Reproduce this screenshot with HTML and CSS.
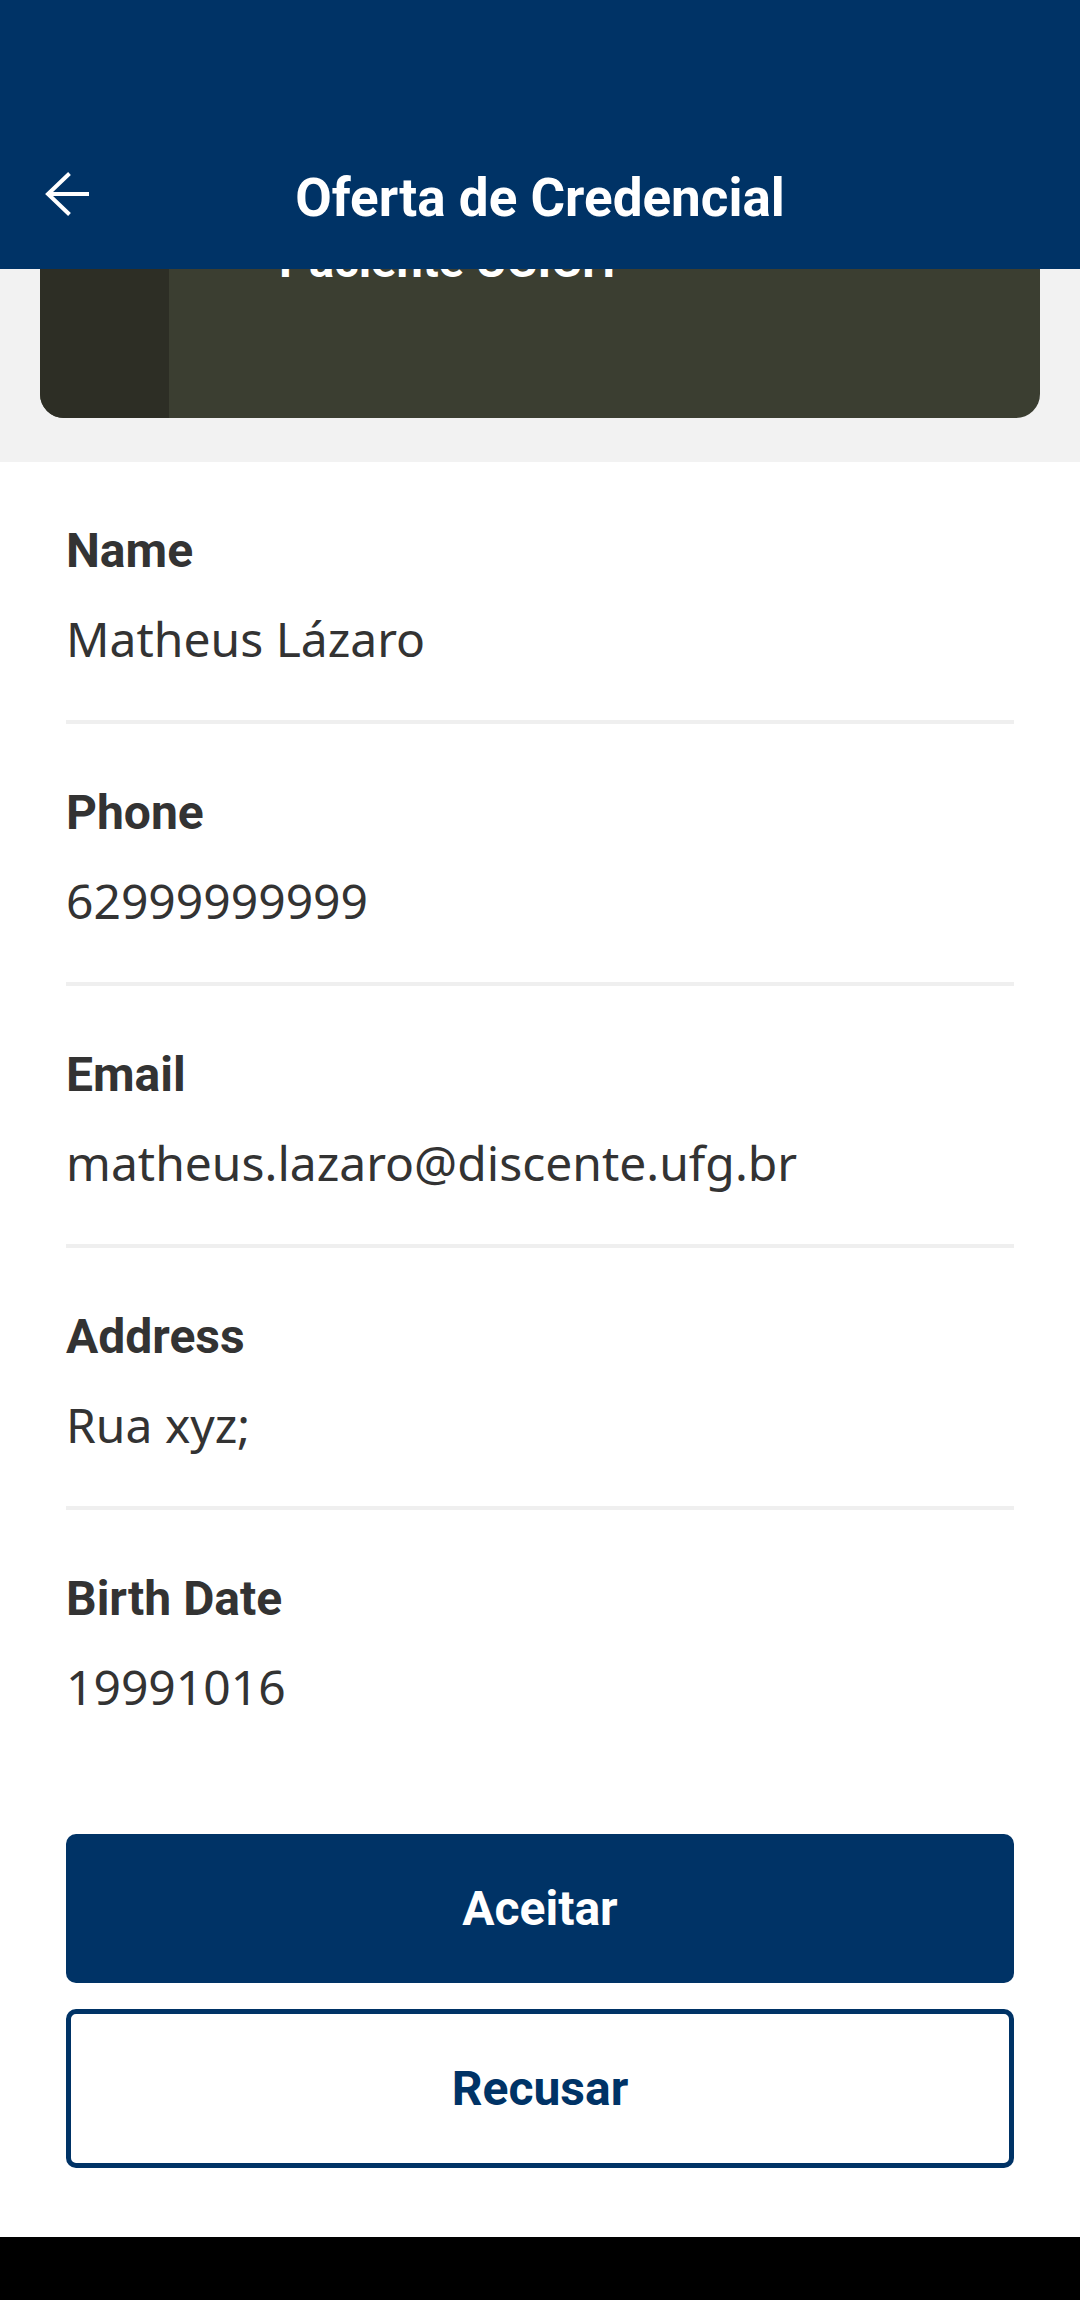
FILE: index.html
```html
<!DOCTYPE html>
<html lang="pt-BR">
<head>
<meta charset="utf-8">
<title>Oferta de Credencial</title>
<link rel="stylesheet" href="styles.css">
</head>
<body>
<div class="screen">
  <header class="appbar">
    <div class="toolbar">
      <button class="back" aria-label="Voltar">
        <svg width="48" height="48" viewBox="0 0 48 48" fill="none" stroke="#ffffff" stroke-width="4">
          <path d="M3 24 H44"/>
          <path d="M24.5 3.5 L3 24 L24.5 44.5"/>
        </svg>
      </button>
      <h1 class="title">Oferta de Credencial</h1>
    </div>
  </header>

  <section class="hero">
    <div class="card">
      <div class="card-strip"></div>
      <div class="card-body"><span class="card-name">Paciente UCICH</span></div>
    </div>
  </section>

  <main class="fields">
    <div class="field">
      <div class="label">Name</div>
      <div class="value">Matheus Lázaro</div>
    </div>
    <div class="field">
      <div class="label">Phone</div>
      <div class="value">62999999999</div>
    </div>
    <div class="field">
      <div class="label">Email</div>
      <div class="value">matheus.lazaro@discente.ufg.br</div>
    </div>
    <div class="field">
      <div class="label">Address</div>
      <div class="value">Rua xyz;</div>
    </div>
    <div class="field last">
      <div class="label">Birth Date</div>
      <div class="value">19991016</div>
    </div>
  </main>

  <div class="actions">
    <button class="btn btn-primary">Aceitar</button>
    <button class="btn btn-outline">Recusar</button>
  </div>

  <div class="navbar"></div>
</div>
</body>
</html>
```

FILE: styles.css
```css
* { box-sizing: border-box; }

html, body {
  margin: 0;
  padding: 0;
  background: #ffffff;
}

.screen {
  width: 1080px;
  min-height: 2300px;
  display: flex;
  flex-direction: column;
  background: #ffffff;
}

.appbar {
  background: #003366;
  height: 269px;
  padding-top: 122px;
  position: relative;
  z-index: 2;
}

.toolbar {
  height: 147px;
  display: flex;
  align-items: center;
  justify-content: center;
  position: relative;
}

.back {
  position: absolute;
  left: 45px;
  top: 50%;
  transform: translateY(-50%);
  margin-top: -2px;
  background: none;
  border: 0;
  padding: 0;
  width: 48px;
  height: 48px;
  display: flex;
}

.title {
  margin: 0;
  color: #ffffff;
  font-family: Roboto, "Liberation Sans", sans-serif;
  font-weight: 700;
  font-size: 53px;
  line-height: 60px;
  margin-top: 4px;
}

.hero {
  background: #f2f2f2;
  height: 193px;
  padding: 0 40px 44px;
  display: flex;
}

.card {
  flex: 1;
  display: flex;
  overflow: hidden;
  border-radius: 0 0 24px 24px;
  background: #3b3e31;
}

.card-strip {
  width: 129px;
  background: #2d2e25;
}

.card-body {
  flex: 1;
  padding-left: 110px;
}

.card-name {
  display: block;
  margin-top: -31px;
  color: #ffffff;
  font-family: Roboto, "Liberation Sans", sans-serif;
  font-weight: 700;
  font-size: 47px;
  line-height: 46px;
}

.fields {
  padding: 0 66px;
}

.field {
  padding: 61px 0 49px;
  border-bottom: 4px solid #efefef;
}

.field.last {
  border-bottom: 0;
}

.label {
  font-family: Roboto, "Liberation Sans", sans-serif;
  font-weight: 700;
  font-size: 48px;
  line-height: 56px;
  color: #333333;
}

.value {
  margin-top: 28px;
  font-family: "Noto Sans", "Open Sans", sans-serif;
  font-weight: 400;
  font-size: 48px;
  line-height: 64px;
  color: #333333;
}

.actions {
  padding: 66px 66px 0;
  display: flex;
  flex-direction: column;
  gap: 26px;
}

.btn {
  display: flex;
  align-items: center;
  justify-content: center;
  width: 100%;
  border-radius: 10px;
  font-family: Roboto, "Liberation Sans", sans-serif;
  font-weight: 700;
  font-size: 48px;
  padding: 0;
  margin: 0;
}

.btn-primary {
  height: 149px;
  background: #003366;
  color: #ffffff;
  border: 0;
}

.btn-outline {
  height: 159px;
  background: #ffffff;
  color: #003366;
  border: 5px solid #003366;
}

.navbar {
  margin-top: auto;
  height: 63px;
  background: #000000;
}
```
